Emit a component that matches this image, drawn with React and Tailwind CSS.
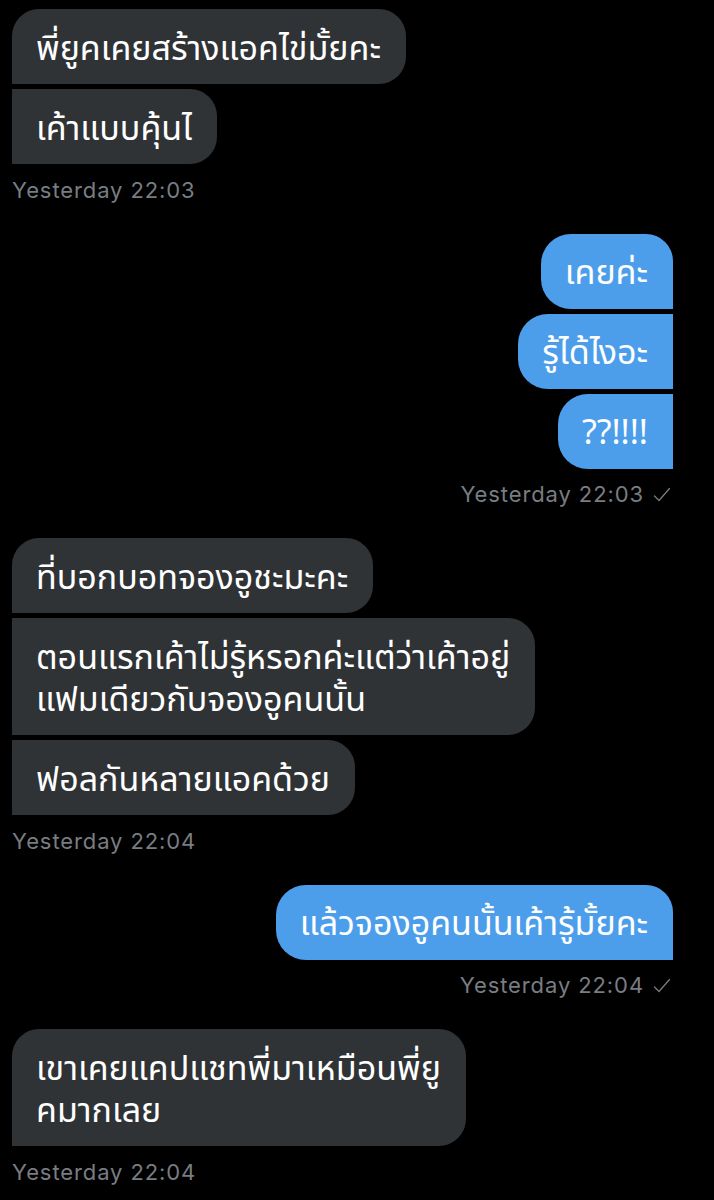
import React from 'react';

const groups = [
  {
    side: 'in',
    messages: [['พี่ยูคเคยสร้างแอคไข่มั้ยคะ'], ['เค้าแบบคุ้นไ']],
    time: 'Yesterday 22:03',
  },
  {
    side: 'out',
    messages: [['เคยค่ะ'], ['รู้ได้ไงอะ'], ['??!!!!']],
    time: 'Yesterday 22:03',
  },
  {
    side: 'in',
    messages: [
      ['ที่บอกบอทจองอูชะมะคะ'],
      ['ตอนแรกเค้าไม่รู้หรอกค่ะแต่ว่าเค้าอยู่', 'แฟมเดียวกับจองอูคนนั้น'],
      ['ฟอลกันหลายแอคด้วย'],
    ],
    time: 'Yesterday 22:04',
  },
  {
    side: 'out',
    messages: [['แล้วจองอูคนนั้นเค้ารู้มั้ยคะ']],
    time: 'Yesterday 22:04',
  },
  {
    side: 'in',
    messages: [['เขาเคยแคปแชทพี่มาเหมือนพี่ยู', 'คมากเลย']],
    time: 'Yesterday 22:04',
  },
];

function Bubble({ side, lines, first })
{
  // first bubble in a group keeps its outer top corner round, the rest are flat on that side
  const shape =
    side === 'in'
      ? first
        ? 'rounded-tl-[27px] rounded-r-[27px]'
        : 'rounded-r-[27px]'
      : first
        ? 'rounded-tr-[27px] rounded-l-[30px]'
        : 'rounded-l-[30px]';

  const color = side === 'in' ? 'bg-[#2f3336]' : 'bg-[#4c9eeb]';

  return (
    <div className={`${color} ${shape} w-fit pl-[24px] pr-[25px] py-[16.5px] text-[34px] leading-[42px] text-white whitespace-nowrap`}>
      {lines.map((l, i) => (
        <div key={i}>{l}</div>
      ))}
    </div>
  );
}

export default function App()
{
  return (
    <div
      className="min-h-[1200px] bg-black pt-[9px] pl-[12px] pr-[41px] flex flex-col"
      style={{ fontFamily: '"Noto Sans", "Noto Sans Thai", "Liberation Sans", sans-serif' }}
    >
      {groups.map((g, gi) => (
        <div key={gi} className={`flex flex-col gap-[5px] mb-[30px] ${g.side === 'in' ? 'items-start' : 'items-end'}`}>
          {g.messages.map((m, mi) => (
            <Bubble key={mi} side={g.side} lines={m} first={mi === 0} />
          ))}
          <div
            className="mt-[6.5px] flex items-center text-[22px] leading-[28px] tracking-[0.9px] text-[#787d82]"
            style={{ fontFamily: 'Inter, "Liberation Sans", sans-serif' }}
          >
            <span>{g.time}</span>
            {g.side === 'out' && (
              <svg width="18" height="16" viewBox="0 0 18 16" fill="none" className="ml-[9px] mr-[2px] mt-[1px]">
                <path d="M1.5 9 L6 13.5 L16.5 1.5" stroke="#787d82" strokeWidth="1.3" strokeLinecap="round" strokeLinejoin="round" />
              </svg>
            )}
          </div>
        </div>
      ))}
    </div>
  );
}
